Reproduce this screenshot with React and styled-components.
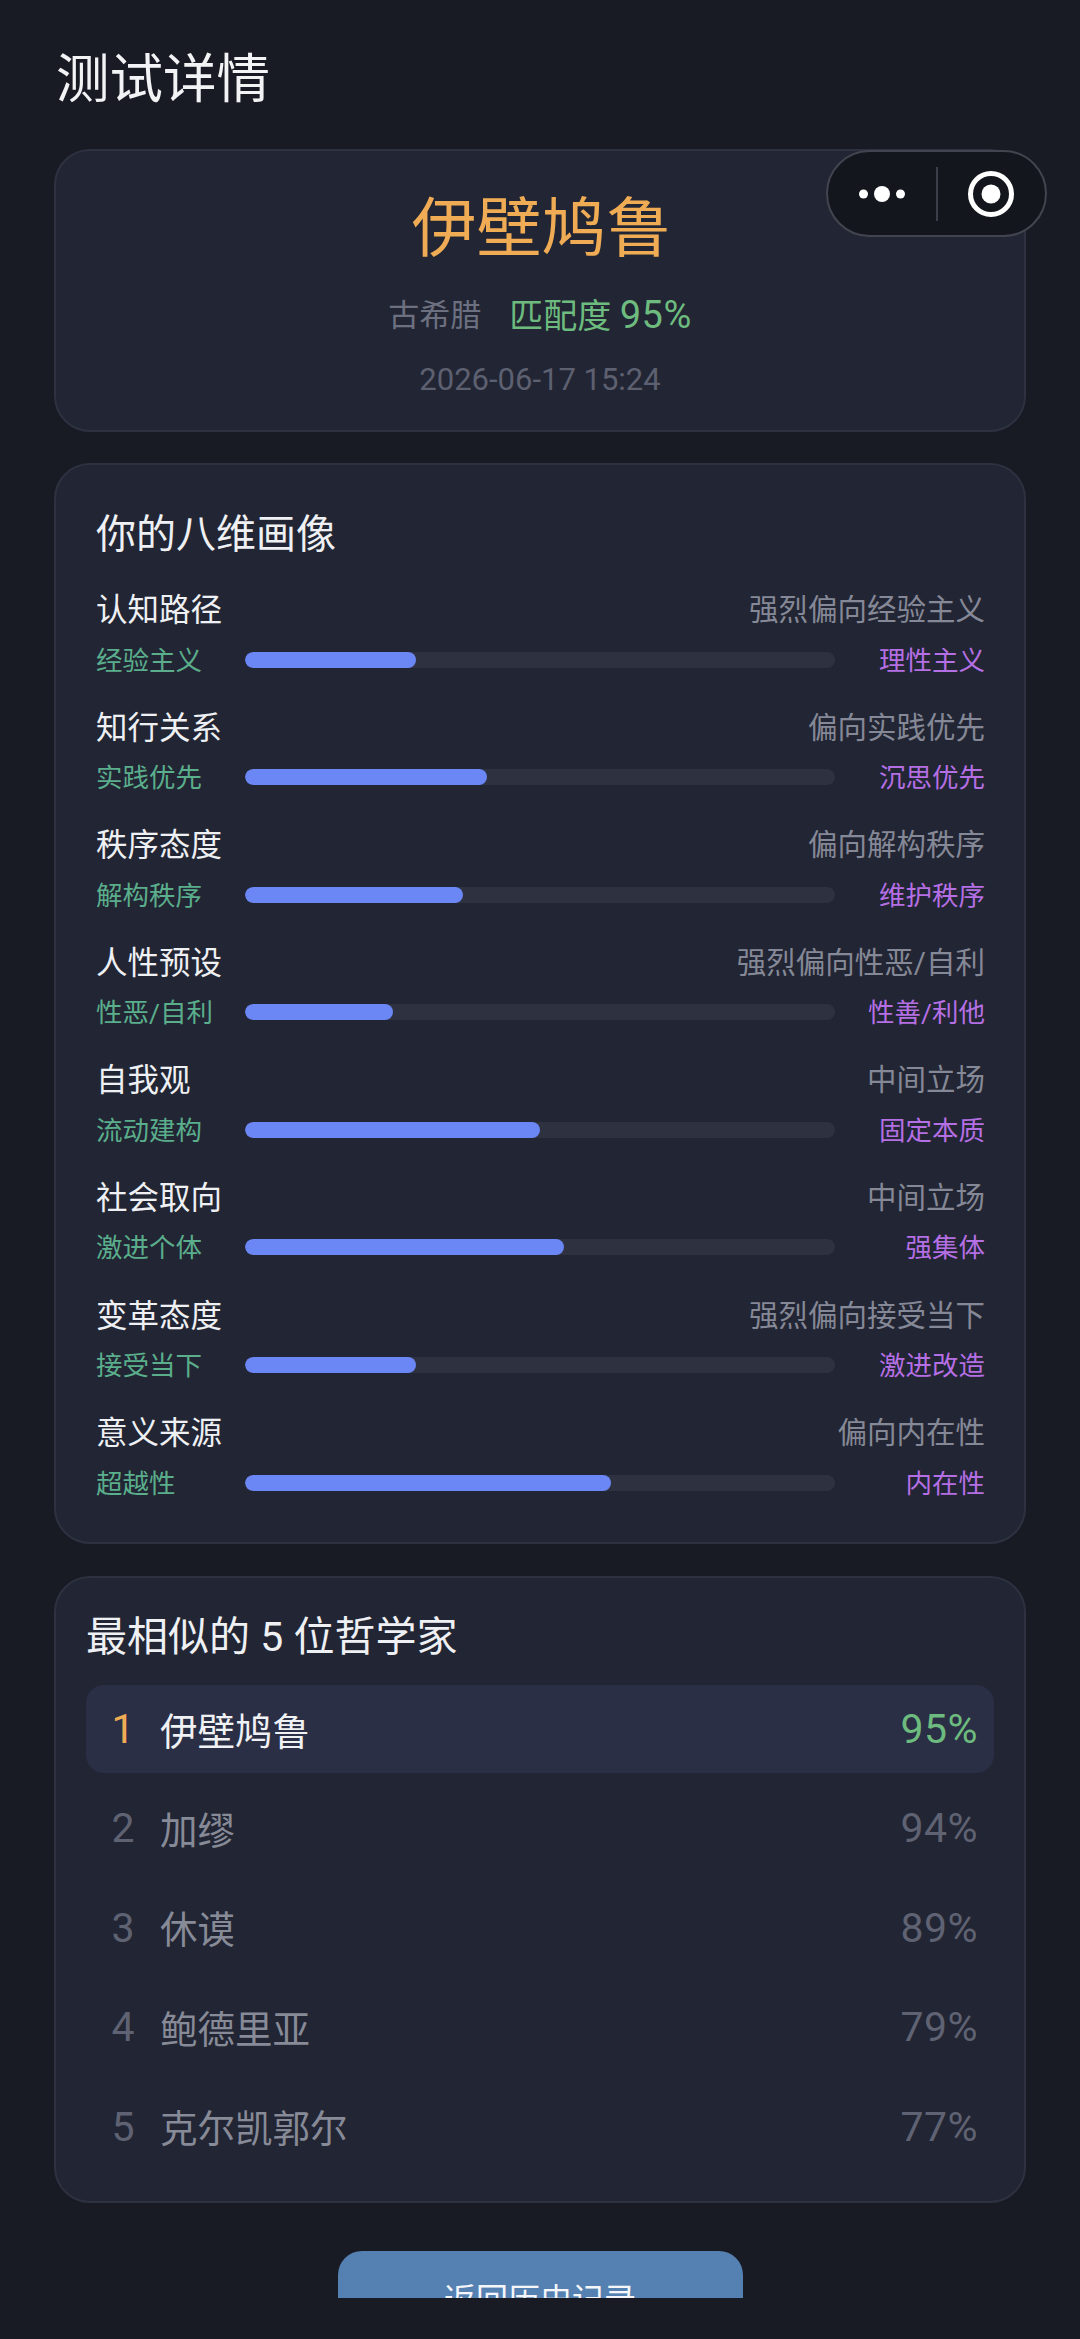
import React from "react";
import styled, { createGlobalStyle } from "styled-components";

const Global = createGlobalStyle`
  html, body { margin: 0; padding: 0; background: #181b24; }
  * { box-sizing: border-box; }
`;

const Screen = styled.div`
  position: relative;
  width: 1080px;
  height: 2339px;
  overflow: hidden;
  background: #181b24;
  font-family: "Roboto", "Noto Sans CJK SC", sans-serif;
  font-weight: 400;
`;
const Scroll = styled.div`
  height: 2298px;
  overflow: hidden;
  padding: 51px 54px 0;
  display: flex;
  flex-direction: column;
`;
const Title = styled.h1`
  margin: 0 0 40px;
  padding-left: 2px;
  font-size: 53.5px;
  line-height: 58px;
  font-weight: 400;
  color: #f2f3f5;
`;
const Card = styled.section`
  flex: none;
  background: #222533;
  border: 2px solid #2e3240;
  border-radius: 36px;
  height: ${(p) => p.$h}px;
  padding: ${(p) => p.$pad};
  margin-bottom: ${(p) => p.$mb}px;
`;
const Hero = styled(Card)`
  display: flex;
  flex-direction: column;
  align-items: center;
`;
const Name = styled.div`
  font-size: 65px;
  line-height: 76px;
  padding-left: 3px;
  color: #f0ac55;
`;
const Meta = styled.div`
  display: flex;
  align-items: center;
  gap: 28px;
  margin-top: 26px;
  line-height: 44px;
`;
const Region = styled.span`
  font-size: 31px;
  color: #6d7080;
`;
const Match = styled.span`
  font-size: 34px;
  color: #6dbb7e;
`;
const MatchValue = styled.span`
  font-size: 38px;
  letter-spacing: 0.5px;
`;
const Stamp = styled.div`
  margin-top: 22px;
  font-size: 31px;
  line-height: 40px;
  color: #5d6070;
`;
const CardTitle = styled.h2`
  margin: 0;
  font-size: ${(p) => p.$size}px;
  line-height: 50px;
  font-weight: 400;
  color: #eef0f3;
`;
const Dims = styled.div`
  padding-top: 24px;
`;
const Dim = styled.div`
  height: 117.6px;
`;
const DimHead = styled.div`
  display: flex;
  justify-content: space-between;
  align-items: center;
  height: 46px;
`;
const DimName = styled.span`
  font-size: 31.5px;
  color: #eef0f3;
`;
const DimTrend = styled.span`
  font-size: 29.5px;
  color: #858896;
`;
const DimScale = styled.div`
  display: flex;
  align-items: center;
  height: 42px;
  margin-top: 8.5px;
`;
const Pole = styled.span`
  flex: none;
  padding-bottom: 3px;
  font-size: 26.5px;
  color: ${(p) => p.$c};
  width: ${(p) => p.$w}px;
  text-align: ${(p) => p.$a};
`;
const Track = styled.div`
  flex: none;
  width: 590px;
  height: 16px;
  border-radius: 8px;
  background: #2e313f;
  overflow: hidden;
`;
const Fill = styled.div`
  height: 100%;
  border-radius: 8px;
  background: #6b86f5;
`;
const Rows = styled.div`
  display: flex;
  flex-direction: column;
  gap: 11.4px;
  margin-top: 23px;
`;
const Row = styled.div`
  display: flex;
  align-items: center;
  height: 88px;
  border-radius: 18px;
  padding: 0 16px 0 0;
  background: ${(p) => (p.$on ? "#2a2f45" : "transparent")};
`;
const Rank = styled.span`
  flex: none;
  width: 74px;
  text-align: center;
  font-size: 41px;
  color: ${(p) => (p.$on ? "#f0ac55" : "#5f6272")};
`;
const PName = styled.span`
  flex: 1;
  padding-bottom: 2px;
  font-size: 37.5px;
  color: ${(p) => (p.$on ? "#f0f1f4" : "#878a97")};
`;
const Pct = styled.span`
  font-size: 41px;
  letter-spacing: 0.5px;
  color: ${(p) => (p.$on ? "#6dbb7e" : "#5f6272")};
`;
const Back = styled.button`
  flex: none;
  align-self: center;
  width: 405px;
  height: 96px;
  margin-top: 48px;
  padding: 0 0 4px;
  border: 0;
  border-radius: 24px;
  background: #5480b2;
  color: #f4f6f9;
  font: inherit;
  font-size: 32px;
`;
const Capsule = styled.div`
  position: absolute;
  left: 826px;
  top: 150px;
  width: 221px;
  height: 87px;
  border-radius: 44px;
  background: #14161e;
  border: 2px solid #42454f;
  display: flex;
  align-items: center;
`;
const CapSide = styled.div`
  flex: 1;
  display: flex;
  align-items: center;
  justify-content: center;
`;
const CapLine = styled.div`
  flex: none;
  width: 2px;
  height: 54px;
  background: #3c3f49;
`;

const dims = [
  ["认知路径", "强烈偏向经验主义", "经验主义", "理性主义", 29],
  ["知行关系", "偏向实践优先", "实践优先", "沉思优先", 41],
  ["秩序态度", "偏向解构秩序", "解构秩序", "维护秩序", 37],
  ["人性预设", "强烈偏向性恶/自利", "性恶/自利", "性善/利他", 25],
  ["自我观", "中间立场", "流动建构", "固定本质", 50],
  ["社会取向", "中间立场", "激进个体", "强集体", 54],
  ["变革态度", "强烈偏向接受当下", "接受当下", "激进改造", 29],
  ["意义来源", "偏向内在性", "超越性", "内在性", 62],
];
const people = [
  ["伊壁鸠鲁", "95%"],
  ["加缪", "94%"],
  ["休谟", "89%"],
  ["鲍德里亚", "79%"],
  ["克尔凯郭尔", "77%"],
];

export default function App() {
  return (
    <Screen>
      <Global />
      <Scroll>
        <Title>测试详情</Title>
        <Hero $h={283} $pad="40px 0 0" $mb={31}>
          <Name>伊壁鸠鲁</Name>
          <Meta>
            <Region>古希腊</Region>
            <Match>
              匹配度 <MatchValue>95%</MatchValue>
            </Match>
          </Meta>
          <Stamp>2026-06-17 15:24</Stamp>
        </Hero>
        <Card $h={1081} $pad="45px 39px 0 40px" $mb={32}>
          <CardTitle $size={40}>你的八维画像</CardTitle>
          <Dims>
            {dims.map(([n, t, l, r, v]) => (
              <Dim key={n}>
                <DimHead>
                  <DimName>{n}</DimName>
                  <DimTrend>{t}</DimTrend>
                </DimHead>
                <DimScale>
                  <Pole $c="#5aae8c" $w={149} $a="left">{l}</Pole>
                  <Track>
                    <Fill style={{ width: `${v}%` }} />
                  </Track>
                  <Pole $c="#b56fe4" $w={150} $a="right">{r}</Pole>
                </DimScale>
              </Dim>
            ))}
          </Dims>
        </Card>
        <Card $h={627} $pad="34px 30px 0" $mb={0}>
          <CardTitle $size={41}>最相似的 5 位哲学家</CardTitle>
          <Rows>
            {people.map(([n, p], i) => (
              <Row key={n} $on={i === 0}>
                <Rank $on={i === 0}>{i + 1}</Rank>
                <PName $on={i === 0}>{n}</PName>
                <Pct $on={i === 0}>{p}</Pct>
              </Row>
            ))}
          </Rows>
        </Card>
        <Back>返回历史记录</Back>
      </Scroll>
      <Capsule>
        <CapSide>
          <svg width="46" height="20" viewBox="0 0 46 20">
            <circle cx="4.5" cy="10" r="4.5" fill="#fff" />
            <circle cx="23" cy="10" r="8" fill="#fff" />
            <circle cx="41.5" cy="10" r="4.5" fill="#fff" />
          </svg>
        </CapSide>
        <CapLine />
        <CapSide>
          <svg width="48" height="48" viewBox="0 0 48 48">
            <circle cx="24" cy="24" r="20.5" fill="none" stroke="#fff" strokeWidth="5" />
            <circle cx="24" cy="24" r="9.5" fill="#fff" />
          </svg>
        </CapSide>
      </Capsule>
    </Screen>
  );
}
